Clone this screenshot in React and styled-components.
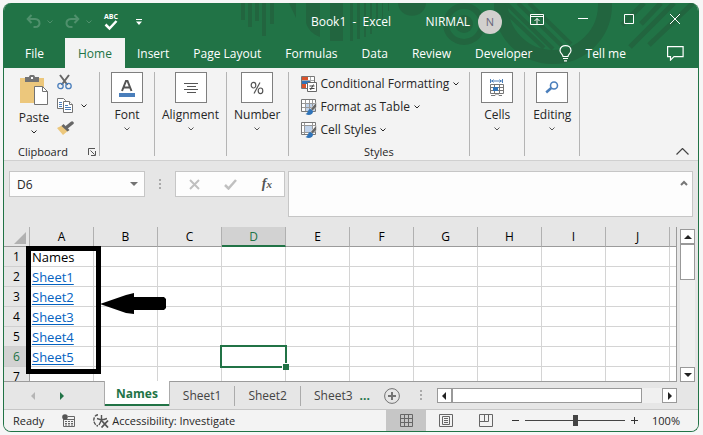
import styled, { createGlobalStyle, css } from 'styled-components'

const GREEN = '#217346'
const COLUMNS = ['A', 'B', 'C', 'D', 'E', 'F', 'G', 'H', 'I', 'J']
const ROWS = [1, 2, 3, 4, 5, 6, 7]
const TABS = ['File', 'Home', 'Insert', 'Page Layout', 'Formulas', 'Data', 'Review', 'Developer']
const LINKS = { 2: 'Sheet1', 3: 'Sheet2', 4: 'Sheet3', 5: 'Sheet4', 6: 'Sheet5' }

const Chevron = () => (
  <svg width="6" height="4" viewBox="0 0 6 4" fill="none" stroke="currentColor">
    <path d="M.5.5 3 3 5.5.5" />
  </svg>
)

const Triangle = ({ d, color = '#222', w = 8, h = 8 }) => (
  <svg width={w} height={h} viewBox="0 0 8 8" fill={color}>
    <path d={d} />
  </svg>
)

const UP = 'M4 2 8 6H0z'
const DOWN = 'M0 2h8L4 6z'
const LEFT = 'M6 0v8L2 4z'
const RIGHT = 'M2 0v8l4-4z'

const Pattern = () => (
  <PatternSvg width="696" height="65" viewBox="3 3 696 65" fill="#22653f">
    <path d="M240 3h4v17h-4zM247 3h4v24h-4zM254 3h4v18h-4zM261 3h4v33h-4zM269 3h4v21h-4z" />
    <path d="M288 3h7v15z" />
    <path d="M305 3h14v34c-8-3-12-8-14-14zM329 3h13v38h-13z" />
    <path d="M349 3h3v38h-3zM356 3h3v36h-3zM363 3h2v34h-2zM369 3h2v31h-2zM375 3h2v25h-2zM381 3h1v19h-1zM387 3h1v8h-1z" />
    <path d="M397 3h28c-1 17-27 17-28 0z" />
    <circle cx="463" cy="24" r="18" fill="none" stroke="#22653f" strokeWidth="6" />
    <circle cx="463" cy="24" r="9" />
    <circle cx="552" cy="5" r="52" fill="none" stroke="#22653f" strokeWidth="14" />
    <g stroke="#22653f" strokeWidth="4">
      <path d="M505 12l38 36M505 3l47 46M517 3l44 43M528 3l42 41" />
      <path d="M621 25l22-22M629 47l44-44M640 24l20-21M648 45l44-42" strokeWidth="5" />
    </g>
  </PatternSvg>
)

const UndoIcon = ({ flip }) => (
  <svg width="15" height="15" viewBox="0 0 15 15" fill="none" stroke="#4f906c" strokeWidth="2">
    <g transform={flip ? 'matrix(-1 0 0 1 15 0)' : undefined}>
      <path d="M5.500 1 1.700 5l3.800 4M2 5h7c6 .5 6 8 0 8H7.500" />
    </g>
  </svg>
)

const SpellIcon = () => (
  <svg width="16" height="18" viewBox="0 0 16 18">
    <text x="8" y="6" textAnchor="middle" fontFamily="Open Sans, sans-serif" fontSize="7" fontWeight="700" fill="#fff">
      ABC
    </text>
    <path d="m2.500 11.500 4 4 7-7.500" fill="none" stroke="#fff" strokeWidth="2.500" />
  </svg>
)

const CustomizeIcon = () => (
  <svg width="6" height="8" viewBox="0 0 6 8" fill="#fff">
    <path d="M0 1h6v1H0zM0 3.500h6L3 7z" />
  </svg>
)

const RibbonDisplayIcon = () => (
  <svg width="14" height="11" viewBox="0 0 14 11" fill="none" stroke="#fff">
    <path d="M.5.5h13v10H.5zM.5 2.500h13M7 10V4.500M4.500 7 7 4.500 9.500 7" />
  </svg>
)

const MinIcon = () => (
  <svg width="10" height="10" viewBox="0 0 10 10" stroke="#fff"><path d="M0 4.500h10" /></svg>
)

const MaxIcon = () => (
  <svg width="10" height="10" viewBox="0 0 10 10" fill="none" stroke="#fff"><path d="M.5.5h9v9h-9z" /></svg>
)

const CloseIcon = () => (
  <svg width="10" height="10" viewBox="0 0 10 10" stroke="#fff"><path d="m0 0 10 10M10 0 0 10" /></svg>
)

const BulbIcon = () => (
  <svg width="13" height="17" viewBox="0 0 13 17" fill="none" stroke="#fff" strokeWidth="1.200">
    <path d="M4 11.500C4 9 1 8.500 1 5.500c0-6.500 11-6.500 11 0 0 3-3 3.500-3 6zM4 13.500h5M5 15.800h3" />
  </svg>
)

const CommentIcon = () => (
  <svg width="17" height="15" viewBox="0 0 17 15" fill="none" stroke="#fff" strokeWidth="1.200">
    <path d="M.6.6h15.500v10H7l-3.500 3.500v-3.500H.6z" />
  </svg>
)

const PasteIcon = () => (
  <svg width="28" height="31" viewBox="0 0 28 31">
    <path d="M0 3h24v25H0z" fill="#ecc77c" />
    <path d="M5 2h4c0-3 6-3 6 0h4v5H5z" fill="#737373" />
    <path d="M11 2h2v2h-2z" fill="#fff" />
    <path d="M14.500 11.500h8l5 5v13h-13z" fill="#fff" stroke="#737373" />
    <path d="M22.500 11.500v5h5" fill="none" stroke="#737373" />
  </svg>
)

const CutIcon = () => (
  <svg width="15" height="16" viewBox="0 0 15 16" fill="none">
    <path d="M3 1l7.500 10M12 1 4.500 11" stroke="#666" strokeWidth="2" />
    <circle cx="3.500" cy="12" r="2.700" stroke="#4a7ebb" strokeWidth="1.300" />
    <circle cx="11.500" cy="12" r="2.700" stroke="#4a7ebb" strokeWidth="1.300" />
  </svg>
)

const CopyIcon = () => (
  <svg width="16" height="15" viewBox="0 0 16 15" fill="#fff" stroke="#737373">
    <path d="M.5.500h6l2 2v8h-8z" />
    <path d="M6.500 3.500h6l3 3v8h-9z" />
    <path d="M12.500 3.500v3h3" />
    <path d="M2 4.500h3M2 6.500h3M2 8.500h3M8 7.500h3M8 9.500h6M8 11.500h6" stroke="#4a7ebb" />
  </svg>
)

const BrushIcon = () => (
  <svg width="17" height="15" viewBox="0 0 17 15">
    <path d="M6 4 0 7l6 7 6-5z" fill="#ecc77c" />
    <path d="m6.500 3 6 6-2 1.500L4.500 5z" fill="#666" />
    <path d="m10 6 5-4" stroke="#666" strokeWidth="3.500" strokeLinecap="round" />
  </svg>
)

const LauncherIcon = () => (
  <svg width="8" height="8" viewBox="0 0 8 8" fill="none" stroke="#555">
    <path d="M.5 7V.5H7M2.500 2.500l4 4M7.500 3v4.500H3" />
  </svg>
)

const FontIcon = () => (
  <svg width="18" height="20" viewBox="0 0 18 20">
    <path d="m4 13 4-10h1.500l4 10M5.500 9.500h7" fill="none" stroke="#555" strokeWidth="2" />
    <path d="M1 15h16v4H1z" fill="#4a7ebb" />
  </svg>
)

const AlignIcon = () => (
  <svg width="14" height="12" viewBox="0 0 14 12" stroke="#555">
    <path d="M0 1.500h14M3 4.500h9M0 7.500h14M3 10.500h9" />
  </svg>
)

const PercentIcon = () => (
  <svg width="14" height="14" viewBox="0 0 14 14" fill="none" stroke="#555" strokeWidth="1.200">
    <ellipse cx="3.500" cy="4.200" rx="2.300" ry="2.800" />
    <ellipse cx="10.500" cy="9.800" rx="2.300" ry="2.800" />
    <path d="m10 1.500-6 11" />
  </svg>
)

const CellsIcon = () => (
  <svg width="16" height="17" viewBox="0 0 16 17" fill="none">
    <path d="M1.500 0v4M13.500 0v4M2 2h11M4.500.5 3 2l1.500 1.500M10.500.5 12 2l-1.500 1.500" stroke="#4a7ebb" />
    <path d="M1.500 5.500h13v9h-13zM5.500 5.500v9M10.500 5.500v9M1.500 8.500h13M1.500 11.500h13M2 16.500h4l2-2 2 2h3" stroke="#777" />
    <path d="M4 8h5v4H4z" fill="#2f73b8" />
  </svg>
)

const FindIcon = () => (
  <svg width="14" height="13" viewBox="0 0 14 13" fill="none" stroke="#4a7ebb">
    <circle cx="9" cy="4.500" r="3.500" strokeWidth="1.600" />
    <path d="M6.200 7 1.200 11.500" strokeWidth="2.500" />
  </svg>
)

const CondIcon = () => (
  <svg width="16" height="16" viewBox="0 0 16 16">
    <path d="M.5.500h13v12H.5z" fill="#fff" stroke="#777" />
    <path d="M1 1h6v3H1zM1 8h4v4H1z" fill="#d9532c" />
    <path d="M1 5h8v3H1z" fill="#2f73b8" />
    <path d="M1 4.500h12M9.500 1v6" stroke="#aaa" />
    <path d="M6.500 6.500h9v9h-9z" fill="#fff" stroke="#666" />
    <path d="M8.500 10h5M8.500 12.500h5M12.500 8.500l-3 5.500" stroke="#444" />
  </svg>
)

const StyleIcon = ({ cells }) => (
  <svg width="16" height="16" viewBox="0 0 16 16">
    <path d="M.5.500h14v12H.5z" fill="#fff" stroke="#777" />
    <path d={cells ? 'M4 4h7v6H4z' : 'M5 5h9v7H5z'} fill="#bfd2ea" />
    <path d={cells ? 'M1 3.500h13M3.500 1v11M11.500 1v11M1 10.500h13' : 'M1 4.500h13M1 8.500h13M4.500 1v11M8.500 1v11M11.500 1v11'} stroke="#999" fill="none" />
    <path d="m15.500 3-6 7 2 2 4-4z" fill="#666" stroke="#f3f3f3" strokeWidth=".6" />
    <path d="M9.500 10c-3 0-2 4-5 5 3 2 8 1 7.500-3z" fill="#2f73b8" />
  </svg>
)

const MacroIcon = () => (
  <svg width="13" height="13" viewBox="0 0 13 13" fill="none" stroke="#666">
    <path d="M1.500 5v7.500h11v-10H6M2 5.500h10" />
    <path d="M3 7.500h8M3 9.500h8M3 11h8" strokeDasharray="2 1" />
    <circle cx="3" cy="3" r="2.800" fill="#555" stroke="none" />
  </svg>
)

const AccessIcon = () => (
  <svg width="16" height="14" viewBox="0 0 16 14" fill="none" stroke="#555" strokeWidth="1.400">
    <path d="M5 .8C2 1 .8 4 .8 6s1 5 4.200 6" strokeDasharray="3.500 1" />
    <path d="M4 4.500l3 1h4l3-1M8.500 1v5L6 11" />
    <path d="m8.500 6.500 6.500 7M15 6.500l-6.500 7" strokeWidth="1.800" />
  </svg>
)

const NormalIcon = () => (
  <svg width="13" height="13" viewBox="0 0 13 13" fill="none" stroke="#666">
    <path d="M.5.500h12v12H.5zM4.500 0v13M8.500 0v13M0 4.500h13M0 8.500h13" />
  </svg>
)

const PageIcon = () => (
  <svg width="14" height="13" viewBox="0 0 14 13" fill="none" stroke="#666">
    <path d="M.5.500h13v12H.5zM3.500 2.500h7v8h-7zM5 4.500h4M5 6.500h4M5 8.500h4" />
  </svg>
)

const BreakIcon = () => (
  <svg width="14" height="13" viewBox="0 0 14 13" fill="none" stroke="#666">
    <path d="M.5.500h13v12H.5zM5.500 0v7.500M9.500 0v7.500M0 7.500h9.500" />
  </svg>
)

const GripDots = () => (
  <svg width="2" height="11" viewBox="0 0 2 11" fill="#aaa">
    <path d="M0 0h2v2H0zM0 4h2v2H0zM0 8h2v2H0z" />
  </svg>
)

const BigGroup = ({ label, icon }) => (
  <Group>
    <BigButton>
      <IconBox>{icon}</IconBox>
      {label}
      <Chevron />
    </BigButton>
  </Group>
)

export default function App() {
  return (
    <>
      <GlobalStyle />
      <Window>
        <Header>
          <Pattern />
          <TitleBar>
            <QuickAccess>
              <PlainButton aria-label="Undo"><UndoIcon /></PlainButton>
              <PlainButton aria-label="Undo list" $faded><Chevron /></PlainButton>
              <PlainButton aria-label="Redo"><UndoIcon flip /></PlainButton>
              <PlainButton aria-label="Redo list" $faded><Chevron /></PlainButton>
              <PlainButton aria-label="Spelling"><SpellIcon /></PlainButton>
              <PlainButton aria-label="Customize toolbar"><CustomizeIcon /></PlainButton>
            </QuickAccess>
            <Title>Book1&nbsp; -&nbsp; Excel</Title>
            <Account>
              NIRMAL
              <Avatar>N</Avatar>
              <WindowButton aria-label="Ribbon display options"><RibbonDisplayIcon /></WindowButton>
              <WindowButton aria-label="Minimize"><MinIcon /></WindowButton>
              <WindowButton aria-label="Maximize"><MaxIcon /></WindowButton>
              <WindowButton aria-label="Close"><CloseIcon /></WindowButton>
            </Account>
          </TitleBar>
          <TabBar>
            {TABS.map((tab) => (
              <Tab key={tab} $active={tab === 'Home'} $wide={tab === 'File'}>{tab}</Tab>
            ))}
            <TellMe><BulbIcon />Tell me</TellMe>
            <CommentButton aria-label="Comments"><CommentIcon /></CommentButton>
          </TabBar>
        </Header>

        <Ribbon>
          <Group>
            <ClipboardTools>
              <PasteButton>
                <PasteIcon />
                Paste
                <Chevron />
              </PasteButton>
              <SmallTools>
                <PlainButton aria-label="Cut"><CutIcon /></PlainButton>
                <CopyRow>
                  <PlainButton aria-label="Copy"><CopyIcon /></PlainButton>
                  <PlainButton aria-label="Copy options"><Chevron /></PlainButton>
                </CopyRow>
                <PlainButton aria-label="Format painter"><BrushIcon /></PlainButton>
              </SmallTools>
            </ClipboardTools>
            <GroupFooter>
              Clipboard
              <PlainButton aria-label="Clipboard settings"><LauncherIcon /></PlainButton>
            </GroupFooter>
          </Group>
          <BigGroup label="Font" icon={<FontIcon />} />
          <BigGroup label="Alignment" icon={<AlignIcon />} />
          <BigGroup label="Number" icon={<PercentIcon />} />
          <Group>
            <StyleList>
              <StyleButton><CondIcon />Conditional Formatting<Chevron /></StyleButton>
              <StyleButton><StyleIcon />Format as Table<Chevron /></StyleButton>
              <StyleButton><StyleIcon cells />Cell Styles<Chevron /></StyleButton>
            </StyleList>
            <GroupFooter $center>Styles</GroupFooter>
          </Group>
          <BigGroup label="Cells" icon={<CellsIcon />} />
          <BigGroup label="Editing" icon={<FindIcon />} />
          <CollapseButton aria-label="Collapse ribbon">
            <svg width="13" height="7" viewBox="0 0 13 7" fill="none" stroke="#444" strokeWidth="1.200">
              <path d="M.5 6.500l6-6 6 6" />
            </svg>
          </CollapseButton>
        </Ribbon>

        <FormulaBar>
          <NameBox>
            <NameInput aria-label="Name box" defaultValue="D6" />
            <PlainButton aria-label="Names list">
              <Triangle d={DOWN} color="#737373" />
            </PlainButton>
          </NameBox>
          <Grip><GripDots /></Grip>
          <FormulaButtons>
            <PlainButton aria-label="Cancel">
              <svg width="11" height="11" viewBox="0 0 11 11" stroke="#c0c0c0" strokeWidth="2"><path d="m1 1 9 9M10 1l-9 9" /></svg>
            </PlainButton>
            <PlainButton aria-label="Enter">
              <svg width="13" height="11" viewBox="0 0 13 11" fill="none" stroke="#c0c0c0" strokeWidth="2.500"><path d="m1 6 3.500 3.500L12 1" /></svg>
            </PlainButton>
            <FxButton>f<sub>x</sub></FxButton>
          </FormulaButtons>
          <FormulaField>
            <FormulaInput aria-label="Formula" />
            <PlainButton aria-label="Collapse formula bar">
              <svg width="8" height="6" viewBox="0 0 8 6" fill="none" stroke="#777" strokeWidth="2"><path d="m1 5 3-3 3 3" /></svg>
            </PlainButton>
          </FormulaField>
        </FormulaBar>

        <SheetArea>
          <GridView>
            <Grid>
              <colgroup>
                <col className="rowhead" />
                {COLUMNS.map((c) => <col key={c} className="cell" />)}
                <col />
              </colgroup>
              <thead>
                <tr>
                  <Corner><svg width="12" height="12" viewBox="0 0 12 12" fill="#b1b1b1"><path d="M12 0v12H0z" /></svg></Corner>
                  {COLUMNS.map((c) => <ColHead key={c} $active={c === 'D'}>{c}</ColHead>)}
                  <ColHead />
                </tr>
              </thead>
              <tbody>
                {ROWS.map((row) => (
                  <tr key={row}>
                    <RowHead $active={row === 6}>{row}</RowHead>
                    {COLUMNS.map((c) => (
                      <Cell key={c}>
                        {c === 'A' && row === 1 && 'Names'}
                        {c === 'A' && LINKS[row] && <a href={`#${LINKS[row]}`}>{LINKS[row]}</a>}
                        {c === 'D' && row === 6 && <Selection />}
                      </Cell>
                    ))}
                    <Cell />
                  </tr>
                ))}
              </tbody>
            </Grid>
            <Highlight />
            <Arrow width="66" height="22" viewBox="0 0 66 22">
              <path d="M0 11 26 2l8-2v4h30l2 2v9l-2 2H34v4l-8-1z" />
            </Arrow>
          </GridView>
          <VScroll>
            <ScrollButton aria-label="Scroll up"><Triangle d={UP} /></ScrollButton>
            <VThumb />
            <ScrollButton aria-label="Scroll down"><Triangle d={DOWN} /></ScrollButton>
          </VScroll>
        </SheetArea>

        <SheetBar>
          <SheetNav>
            <PlainButton aria-label="Previous sheet"><Triangle d={LEFT} color="#b5b5b5" /></PlainButton>
            <PlainButton aria-label="Next sheet"><Triangle d={RIGHT} color={GREEN} /></PlainButton>
          </SheetNav>
          <SheetTab $active>Names</SheetTab>
          <SheetTab>Sheet1</SheetTab>
          <SheetTab>Sheet2</SheetTab>
          <SheetTab $last>Sheet3</SheetTab>
          <MoreSheets>...</MoreSheets>
          <PlainButton aria-label="New sheet">
            <svg width="16" height="16" viewBox="0 0 16 16" fill="none" stroke="#737373">
              <circle cx="8" cy="8" r="7.400" />
              <path d="M8 4v8M4 8h8" strokeWidth="2" />
            </svg>
          </PlainButton>
          <SheetGrip><GripDots /></SheetGrip>
          <HScroll>
            <ScrollButton aria-label="Scroll left"><Triangle d={LEFT} /></ScrollButton>
            <HThumb />
            <ScrollButton aria-label="Scroll right"><Triangle d={RIGHT} /></ScrollButton>
          </HScroll>
        </SheetBar>

        <StatusBar>
          <StatusText>Ready</StatusText>
          <PlainButton aria-label="Record macro"><MacroIcon /></PlainButton>
          <AccessButton><AccessIcon />Accessibility: Investigate</AccessButton>
          <Views>
            <ViewButton aria-label="Normal" $active><NormalIcon /></ViewButton>
            <ViewButton aria-label="Page layout"><PageIcon /></ViewButton>
            <ViewButton aria-label="Page break preview"><BreakIcon /></ViewButton>
          </Views>
          <Zoom>
            <PlainButton aria-label="Zoom out">
              <svg width="7" height="7" viewBox="0 0 7 7" stroke="#333"><path d="M0 3.500h7" /></svg>
            </PlainButton>
            <Slider type="range" aria-label="Zoom" min="0" max="200" defaultValue="100" />
            <PlainButton aria-label="Zoom in">
              <svg width="7" height="7" viewBox="0 0 7 7" stroke="#333"><path d="M0 3.500h7M3.500 0v7" /></svg>
            </PlainButton>
          </Zoom>
          <StatusText>100%</StatusText>
        </StatusBar>
      </Window>
    </>
  )
}

const GlobalStyle = createGlobalStyle`
  * {
    box-sizing: border-box;
  }

  body {
    margin: 0;
    background: #f6f6f6;
    font-family: "Open Sans", "Noto Sans", sans-serif;
    font-size: 12px;
    color: #262626;
  }

  button, input, textarea {
    font: inherit;
    color: inherit;
    margin: 0;
    padding: 0;
    border: 0;
    background: none;
  }

  svg {
    display: block;
    flex: none;
  }
`

const Window = styled.div`
  display: flex;
  flex-direction: column;
  height: calc(100vh - 6px);
  margin: 3px 4px 3px 3px;
  border: 1px solid ${GREEN};
  border-top: 0;
  border-radius: 8px;
  overflow: hidden;
  background: #e6e6e6;
`

const Header = styled.header`
  position: relative;
  background: ${GREEN};
  color: #fff;
`

const PatternSvg = styled.svg`
  position: absolute;
  top: 0;
  left: 0;
`

const TitleBar = styled.div`
  position: relative;
  display: grid;
  grid-template-columns: 1fr auto 1fr;
  align-items: center;
  height: 35px;
  padding-top: 2px;
`

const PlainButton = styled.button`
  display: flex;
  align-items: center;
  justify-content: center;
  color: ${(p) => (p.$faded ? '#4f906c' : 'inherit')};
`

const QuickAccess = styled.div`
  display: flex;
  align-items: center;
  padding-left: 22px;

  button:nth-child(2) {
    margin: 0 12px 0 6px;
  }

  button:nth-child(4) {
    margin: 0 11px 0 6px;
  }

  button:last-child {
    margin-left: 17px;
  }
`

const Title = styled.div`
  white-space: pre;
`

const Account = styled.div`
  display: flex;
  align-items: center;
  align-self: stretch;
  justify-content: flex-end;
`

const Avatar = styled.span`
  display: flex;
  align-items: center;
  justify-content: center;
  width: 24px;
  height: 24px;
  margin: 0 12px 0 8px;
  border-radius: 50%;
  background: #d2d0ce;
  color: #69657a;
  font-size: 11px;
`

const WindowButton = styled(PlainButton)`
  align-self: flex-start;
  width: 46px;
  height: 28px;
`

const TabBar = styled.nav`
  position: relative;
  display: flex;
  height: 30px;
`

const Tab = styled.button`
  padding: 0 12px;
  white-space: nowrap;

  ${(p) => p.$wide && css`
    width: 61px;
  `}

  ${(p) => p.$active && css`
    padding: 0 13px;
    background: #f3f3f3;
    color: ${GREEN};
  `}
`

const TellMe = styled(PlainButton)`
  gap: 14px;
  margin-left: 14px;
`

const CommentButton = styled(PlainButton)`
  margin: 0 14px 0 auto;
`

const Ribbon = styled.div`
  display: flex;
  padding: 4px 0;
  border-bottom: 1px solid #d0d0d0;
  background: #f3f3f3;
`

const Group = styled.section`
  display: flex;
  flex-direction: column;
  min-width: 55px;
  height: 84px;
  border-right: 1px solid #b4b4b4;
`

const BigButton = styled.button`
  display: flex;
  flex-direction: column;
  align-items: center;
  padding: 0 7px;
  line-height: 24px;

  & > svg {
    color: #555;
  }
`

const IconBox = styled.span`
  display: flex;
  align-items: center;
  justify-content: center;
  width: 32px;
  height: 31px;
  border: 1px solid #7f7f7f;
  background: #fff;
`

const ClipboardTools = styled.div`
  display: flex;
  flex: 1;
  gap: 8px;
  padding: 2px 12px 0 15px;
`

const PasteButton = styled.button`
  display: flex;
  flex-direction: column;
  align-items: center;
  align-self: flex-start;
  width: 30px;
  padding-top: 1px;
  line-height: 24px;
`

const SmallTools = styled.div`
  display: flex;
  flex-direction: column;
  align-items: flex-start;
  gap: 8px;
`

const CopyRow = styled.div`
  display: flex;
  gap: 8px;
`

const GroupFooter = styled.div`
  display: flex;
  align-items: center;
  justify-content: ${(p) => (p.$center ? 'center' : 'space-between')};
  padding: ${(p) => (p.$center ? 0 : '0 3px 0 14px')};
  font-size: 11px;
  line-height: 8px;
  margin-top: auto;
`

const StyleList = styled.div`
  padding: 0 10px 0 12px;
`

const StyleButton = styled.button`
  display: flex;
  align-items: center;
  gap: 4px;
  height: 23px;
  white-space: nowrap;
`

const CollapseButton = styled(PlainButton)`
  align-self: flex-end;
  margin: 0 9px 1px auto;
`

const FormulaBar = styled.div`
  display: flex;
  align-items: flex-start;
  padding: 10px 5px;
`

const NameBox = styled.div`
  display: flex;
  align-items: center;
  width: 136px;
  height: 26px;
  padding: 0 6px 0 7px;
  border: 1px solid #c6c6c6;
  background: #fdfdfd;
`

const NameInput = styled.input`
  flex: 1;
  min-width: 0;
  outline: none;
`

const Grip = styled.div`
  display: flex;
  align-items: center;
  justify-content: center;
  width: 30px;
  height: 26px;
`

const FormulaButtons = styled.div`
  display: flex;
  align-items: center;
  justify-content: space-between;
  width: 110px;
  height: 26px;
  margin-right: 3px;
  padding: 0 12px 0 13px;
  border: 1px solid #c6c6c6;
  background: #fdfdfd;
`

const FxButton = styled.button`
  font: italic bold 14px/16px "Liberation Serif", serif;
  color: #555;

  sub {
    font-size: 11px;
    line-height: 0;
    vertical-align: baseline;
  }
`

const FormulaField = styled.div`
  display: flex;
  align-items: flex-start;
  flex: 1;
  height: 46px;
  padding: 8px 4px;
  border: 1px solid #c6c6c6;
  background: #fdfdfd;
`

const FormulaInput = styled.textarea`
  flex: 1;
  height: 28px;
  resize: none;
  outline: none;
`

const SheetArea = styled.main`
  display: flex;
  flex: 1;
  min-height: 0;
`

const GridView = styled.div`
  position: relative;
  flex: 1;
  min-width: 0;
  overflow: hidden;
  border-right: 1px solid #9b9b9b;
  border-bottom: 1px solid #9b9b9b;
`

const Grid = styled.table`
  width: 100%;
  table-layout: fixed;
  border-collapse: separate;
  border-spacing: 0;
  font-size: 13px;
  line-height: 18px;
  color: #000;

  .rowhead {
    width: 26px;
  }

  .cell {
    width: 64px;
  }

  th, td {
    height: 20px;
    padding: 0;
  }
`

const ColHead = styled.th`
  border-right: 1px solid #b0b0b0;
  border-bottom: 1px solid #9b9b9b;
  font-size: 12px;
  font-weight: 400;
  background: #e6e6e6;

  &:last-child {
    border-right: 0;
  }

  ${(p) => p.$active && css`
    border-bottom: 2px solid ${GREEN};
    background: #d2d2d2;
    color: ${GREEN};
    line-height: 17px;
  `}
`

const Corner = styled(ColHead)`
  svg {
    margin: 3px 3px 0 auto;
  }
`

const RowHead = styled.th`
  border-right: 1px solid #9b9b9b;
  border-bottom: 1px solid #cfcfcf;
  font-size: 12px;
  font-weight: 400;
  background: ${(p) => (p.$active ? '#d2d2d2' : '#e6e6e6')};
  color: ${(p) => (p.$active ? GREEN : '#000')};
`

const Cell = styled.td`
  position: relative;
  border-right: 1px solid #d4d4d4;
  border-bottom: 1px solid #d4d4d4;
  background: #fff;

  &:last-child {
    border-right: 0;
  }

  && {
    padding-left: 2px;
  }

  a {
    color: #0563c1;
    text-underline-offset: 2px;
  }
`

const Selection = styled.div`
  position: absolute;
  z-index: 1;
  inset: -2px;
  border: 2px solid ${GREEN};

  &::after {
    content: '';
    position: absolute;
    right: -4px;
    bottom: -4px;
    width: 6px;
    height: 6px;
    border: 1px solid #fff;
    border-width: 1px 0 0 1px;
    background: ${GREEN};
  }
`

/* callout drawn over the list of links */
const Highlight = styled.div`
  position: absolute;
  top: 19px;
  left: 22px;
  width: 75px;
  height: 128px;
  border: 5px solid #000;
  pointer-events: none;
`

const Arrow = styled.svg`
  position: absolute;
  top: 66px;
  left: 96px;
`

const VScroll = styled.div`
  display: flex;
  flex-direction: column;
  width: 15px;
  margin: 2px 3px 0 3px;
  background: #f0f0f0;

  button:last-child {
    margin-top: auto;
  }
`

const ScrollButton = styled(PlainButton)`
  flex: none;
  width: 15px;
  height: 15px;
  border: 1px solid #999;
  background: #fff;
`

const VThumb = styled.div`
  height: 36px;
  border: 1px solid #999;
  background: #fff;
`

const SheetBar = styled.div`
  display: flex;
  align-items: center;
  height: 28px;
  padding-right: 21px;
  border-bottom: 1px solid #c6c6c6;
`

const SheetNav = styled.div`
  display: flex;
  gap: 21px;
  width: 100px;
  padding-left: 25px;
`

const SheetTab = styled.button`
  position: relative;
  height: 20px;
  padding: 0 13px;
  border-right: 1px solid ${(p) => (p.$last ? 'transparent' : '#ababab')};
  color: #444;

  ${(p) => p.$active && css`
    align-self: flex-start;
    height: 25px;
    margin-top: -1px;
    padding: 0 11px;
    border: 1px solid #ababab;
    border-width: 0 1px;
    background: #fff;
    color: ${GREEN};
    font-weight: 700;
    box-shadow: inset 0 -2px ${GREEN};
  `}
`

const MoreSheets = styled.button`
  margin: 0 14px 0 -7px;
  font-weight: 700;
  color: ${GREEN};
`

const SheetGrip = styled.div`
  margin: 0 15px 0 20px;
`

const HScroll = styled.div`
  display: flex;
  flex: 1;
  background: #f0f0f0;

  button:last-child {
    margin-left: auto;
  }
`

const HThumb = styled.div`
  width: 79%;
  border: 1px solid #999;
  background: #fff;
`

const StatusBar = styled.footer`
  display: flex;
  align-items: center;
  height: 21px;
  padding: 0 18px 0 9px;
  background: #f3f3f3;
  font-size: 11px;
`

const StatusText = styled.span`
  margin-right: 18px;

  &:last-child {
    margin: 0 0 0 14px;
  }
`

const AccessButton = styled(PlainButton)`
  gap: 3px;
  margin-left: 18px;
`

const Views = styled.div`
  display: flex;
  align-self: stretch;
  margin-left: auto;
`

const ViewButton = styled(PlainButton)`
  width: 40px;
  background: ${(p) => (p.$active ? '#c6c6c6' : 'none')};
`

const Zoom = styled.div`
  display: flex;
  align-items: center;
  gap: 6px;
  margin-left: 6px;
`

const Slider = styled.input`
  appearance: none;
  width: 100px;
  height: 11px;
  background: linear-gradient(#444, #444) center / 100% 1px no-repeat;

  &::-webkit-slider-thumb {
    appearance: none;
    width: 5px;
    height: 11px;
    background: #444;
  }
`
